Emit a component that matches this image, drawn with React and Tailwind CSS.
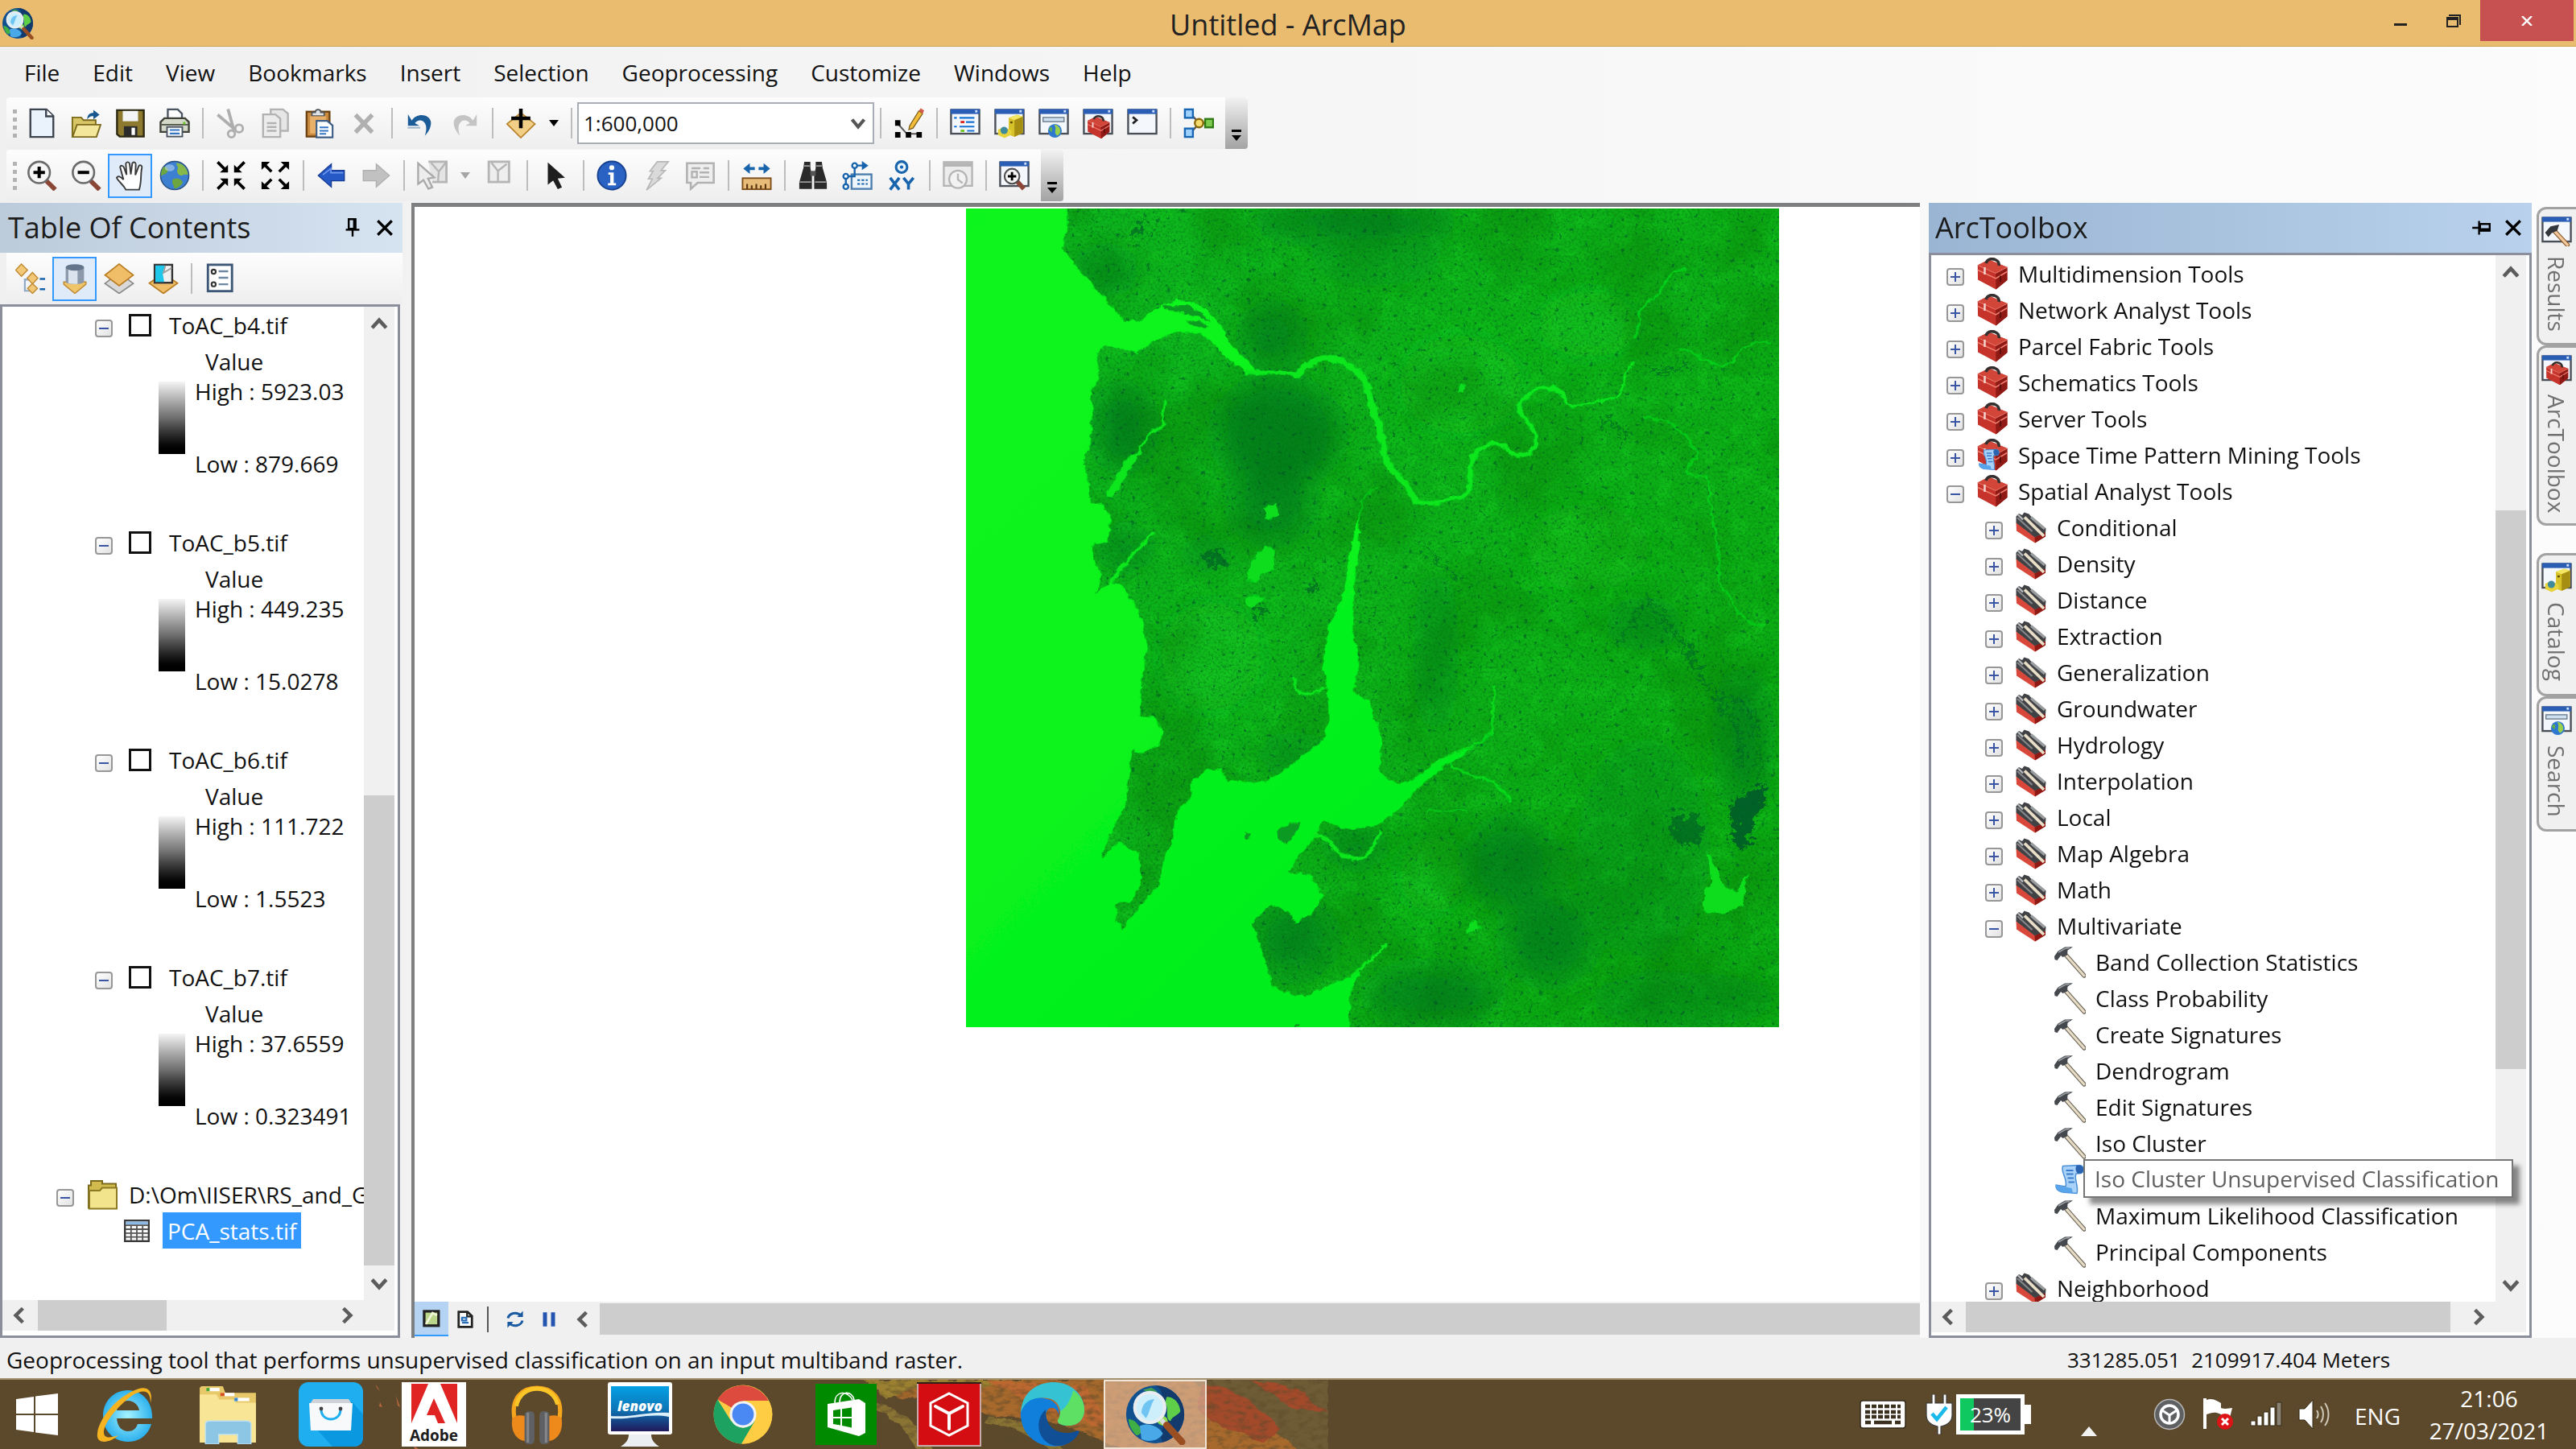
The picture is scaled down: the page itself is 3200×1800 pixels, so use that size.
import React from "react";

const Icon = ({ children, className = "w-[38px] h-[38px]" }) => (
  <svg viewBox="0 0 16 16" className={`shrink-0 ${className}`} fill="none" aria-hidden="true">
    {children}
  </svg>
);

/* ---------- shared drawings ---------- */

const WindowFrame = () => (
  <>
    <rect x="0.6" y="1.1" width="14.8" height="12.4" fill="#f4f8fc" stroke="#4a4f57" strokeWidth="1" />
    <rect x="0.4" y="0.6" width="15.2" height="2.6" fill="#2a5db4" />
    <rect x="13.2" y="1.2" width="1.2" height="1.2" fill="#cfe0ff" />
  </>
);

const ToolboxShape = () => (
  <>
    <path d="M0.7 3.8 6.2 1 15.4 4.8V11.2L9.8 15.8 0.8 11Z" fill="#c5332a" />
    <path d="M0.7 3.8 6.2 1 15.4 4.8 9.6 7.8Z" fill="#d2463a" />
    <path d="M9.6 7.8 15.4 4.8V11.2L9.8 15.8Z" fill="#8f1a15" />
    <path d="M0.8 6.2 9.7 10.4 15.3 7" stroke="#ee7f72" strokeWidth="0.6" />
    <path d="M0.7 3.8 9.6 7.8 15.4 4.8" stroke="#e8776a" strokeWidth="0.4" />
    <path d="M4.8 2.8C5.4 0.8 7.4 0.3 9.2 0.9 10.8 1.6 11.5 2.7 11.2 4" stroke="#33302f" strokeWidth="1.4" />
    <path d="M4.2 4.8V8.4" stroke="#f3d5d0" strokeWidth="1" />
    <path d="M12 9V12" stroke="#5c0f0b" strokeWidth="0.8" />
  </>
);

const GlobeLens = () => (
  <>
    <circle cx="8" cy="8" r="7.6" fill="#11508f" />
    <path d="M8 0.4A7.6 7.6 0 0 1 15.6 8 7.6 7.6 0 0 1 10 15.3C8 12 13 9 10 6 9 4 11 2 8 0.4Z" fill="#123a6c" />
    <path d="M11 3.4C13 3.4 14.4 5 14.6 7.2 13.6 8.6 12.4 8.4 12 9.8 10.4 9 11.8 6.6 10.6 5Z" fill="#5fce48" />
    <path d="M9 8.4C10.4 8 11.6 9 11.2 10.4 10.4 11.4 9 10.8 8.6 10Z" fill="#8fdc4a" />
    <path d="M1 9.2C3 9.4 3.6 11 4.6 12 4.2 13.2 3.6 13.6 3 13.4 1.8 12.2 1.1 10.8 1 9.2Z" fill="#3fae45" />
    <path d="M4 11C6 10 9 11 10 13 9 15 6 15.4 4.4 14.4Z" fill="#49a9e8" />
    <path d="M4.8 1.6 7 1 8.6 2 6.4 2.4Z" fill="#3f9a58" />
    <circle cx="6.6" cy="6.2" r="3.9" fill="#cdeefb" stroke="#e8edf1" strokeWidth="0.9" />
    <path d="M4.4 7.6C4.6 5 6 4.2 7.8 4 6.8 5.4 6.6 7.6 5.6 9Z" fill="#6fc4f2" />
    <path d="M9.6 9.4 11 11" stroke="#d9dde0" strokeWidth="1.2" />
    <path d="M11 10.8 15 15.2" stroke="#9a4f22" strokeWidth="1.8" strokeLinecap="round" />
  </>
);

const SmallGlobe = ({ cx, cy, r }) => (
  <>
    <circle cx={cx} cy={cy} r={r} fill="#2f78cf" />
    <path
      d={`M${cx - r * 0.1} ${cy - r * 0.9}C${cx + r * 0.9} ${cy - r * 0.8} ${cx + r * 1.1} ${cy + r * 0.5} ${cx + r * 0.3} ${cy + r * 0.7}C${cx - r * 0.3} ${cy + r * 0.2} ${cx + r * 0.4} ${cy - r * 0.2} ${cx - r * 0.1} ${cy - r * 0.9}Z`}
      fill="#9ad04c"
    />
    <path
      d={`M${cx - r * 0.9} ${cy - r * 0.2}C${cx - r * 0.5} ${cy - r * 0.9} ${cx - r * 0.2} ${cy - r * 0.4} ${cx - r * 0.5} ${cy + r * 0.2}Z`}
      fill="#5fae4c"
    />
  </>
);

const Cabinet = () => (
  <>
    <path d="M7.6 5.2 12 3.6 15 4.6V13L10.6 15.2 7.6 14Z" fill="#d8c22a" />
    <path d="M7.6 5.2 12 3.6 15 4.6 10.6 6.4Z" fill="#f3e663" />
    <path d="M10.6 6.4 15 4.6V13L10.6 15.2Z" fill="#a58e12" />
    <path d="M2 11.4 5.2 10 9 11.8V14L5.4 15.8 2 14.2Z" fill="#e7d43c" />
    <circle cx="5.2" cy="11.8" r="1.9" fill="#3f8a9c" />
    <path d="M8.4 7.6H9.6" stroke="#5a4d05" strokeWidth="1" />
  </>
);

const HammerShape = () => (
  <>
    <path d="M6 4.4 15.2 14.8" stroke="#6e675a" strokeWidth="2.2" strokeLinecap="round" />
    <path d="M6.2 4.6 15.1 14.7" stroke="#e6dcc5" strokeWidth="1.3" strokeLinecap="round" />
    <path d="M0.4 5.2 2.2 2.6 5.6 0.6 9.6 0.5 7 2.2 6.8 4.6 4.6 5.6 3.6 4.8 1.8 7.2 0.6 6.8Z" fill="#45484c" />
    <path d="M2.4 3.2 5.8 1.3 8 1" stroke="#9da2a8" strokeWidth="0.6" />
  </>
);

const ScrollShape = () => (
  <>
    <path d="M4.6 1.4 12.6 1C15 1 15.6 3.8 13.8 5L11.2 5.2C10 8 12.6 11 11.6 15L4.4 14.4C2 13.8 1 12.4 1.2 10.8L6 11.6C7.2 8 3.4 4.6 4.6 1.4Z" fill="#a9d2f8" stroke="#4b8fd6" strokeWidth="0.6" />
    <path d="M6.2 3.6H9.8M6.4 5.4H9.8M7 7.4H10M7.4 9.4H10.4" stroke="#3b7ccb" strokeWidth="0.8" />
    <path d="M11.4 1.2C10.6 2.6 11 4 12 5.1L13.8 5C15.6 3.8 15 1 12.6 1Z" fill="#2a64b0" />
    <path d="M1.2 10.8 9 12.4 9.6 14.8 4.4 14.4C2 13.8 1 12.4 1.2 10.8Z" fill="#57a4ea" />
  </>
);

const SmallToolbox = () => (
  <Icon className="w-10 h-10"><ToolboxShape /></Icon>
);
const ScriptToolbox = () => (
  <Icon className="w-10 h-10">
    <ToolboxShape />
    <g transform="translate(0.6 4.6) scale(0.72)"><ScrollShape /></g>
  </Icon>
);
const Toolset = () => (
  <Icon className="w-10 h-10">
    <path d="M0.6 5.6 10 12.8 15.2 10.4V12.6L10 15.8 0.8 9.8Z" fill="#d9463a" />
    <path d="M9.8 12.8 15.2 10.2V12.6L10 15.8Z" fill="#8f1a15" />
    <path d="M0.6 2.6 2 1.2 3.6 2 4.6 0.6 7 1.4 8 2.6 15.4 8.6 15.2 10.6 9.8 12.9 0.6 5.8Z" fill="#3f4144" />
    <path d="M8 3 14.8 8.8" stroke="#9a9da0" strokeWidth="1.3" />
    <path d="M4.8 3 14.4 12.4" stroke="#e9dec7" strokeWidth="1.5" />
    <path d="M1.2 3.2 8.6 10" stroke="#85878a" strokeWidth="0.9" />
    <path d="M1.6 1.8 4 4.2" stroke="#b9bcbf" strokeWidth="0.9" />
  </Icon>
);
const Hammer = () => (
  <Icon className="w-10 h-10"><HammerShape /></Icon>
);
const Script = () => (
  <Icon className="w-10 h-10"><ScrollShape /></Icon>
);

/* ---------- toolbar icons ---------- */

const icons = {
  new: (
    <Icon>
      <path d="M2 0.8H10.4L14 4.2V15.2H2Z" fill="#eaf3fb" stroke="#3c4450" />
      <path d="M10.2 0.8V4.4H14" fill="#fff" stroke="#3c4450" />
    </Icon>
  ),
  open: (
    <Icon>
      <path d="M0.8 5H5.4L6.6 6.4H13V15H0.8Z" fill="#d8c566" stroke="#7c6a1c" strokeWidth="0.8" />
      <path d="M3.2 8.8H15.6L13.4 15.2H0.9Z" fill="#f3e79b" stroke="#7c6a1c" strokeWidth="0.8" />
      <path d="M8.6 6C8.6 3.6 9.8 2.6 11.8 2.6V1L15 3.6 11.8 6V4.4C10.4 4.2 9.6 4.8 8.6 6Z" fill="#17578f" />
    </Icon>
  ),
  save: (
    <Icon>
      <path d="M1 1.2H15V15H2.4L1 13.8Z" fill="#8d7a2f" stroke="#2b2710" />
      <rect x="4" y="1.6" width="8" height="5.4" fill="#f2f4f6" />
      <rect x="4.6" y="9.6" width="7" height="5.2" fill="#2b2b2b" />
      <rect x="8.6" y="10.4" width="1.8" height="3.8" fill="#fff" />
    </Icon>
  ),
  print: (
    <Icon>
      <path d="M4.4 7V0.8H9.6L11.8 3V7" fill="#fff" stroke="#4a5462" />
      <path d="M0.6 7.4 2.6 5.4H13.4L15.4 7.4V12.6H0.6Z" fill="#d4d8c8" stroke="#3e4238" />
      <path d="M1 8.8H15" stroke="#4c5146" strokeWidth="0.8" />
      <rect x="4" y="10" width="8" height="5" fill="#fff" stroke="#4a5462" strokeWidth="0.8" />
      <path d="M5.4 11.6H10.6M5.4 13.4H10.6" stroke="#3576c4" strokeWidth="0.9" />
      <circle cx="13" cy="8" r="0.7" fill="#6cc421" />
    </Icon>
  ),
  cut: (
    <Icon>
      <path d="M1 3.6 10.2 11.4M6.4 0.6 9.4 11.4" stroke="#aeaeae" strokeWidth="1.6" />
      <circle cx="12.2" cy="10.8" r="2" stroke="#aeaeae" strokeWidth="1.2" />
      <circle cx="8.2" cy="13.6" r="1.8" stroke="#aeaeae" strokeWidth="1.2" />
    </Icon>
  ),
  copy: (
    <Icon>
      <path d="M5.6 0.8H12L14.6 3V12H5.6Z" fill="#e6e6e6" stroke="#b2b2b2" />
      <path d="M1.6 3.4H8L10.6 5.6V15.2H1.6Z" fill="#ececec" stroke="#b2b2b2" />
      <path d="M3.6 8H8.6M3.6 10H8.6M3.6 12H8.6" stroke="#b2b2b2" />
    </Icon>
  ),
  paste: (
    <Icon>
      <rect x="1.2" y="2" width="12" height="13" fill="#c98a3f" stroke="#6d4312" />
      <path d="M4 4.2V2.4H5.8C5.8 0.4 8.6 0.4 8.6 2.4H10.4V4.2Z" fill="#dfe3e6" stroke="#4d5358" strokeWidth="0.7" />
      <rect x="3" y="4.4" width="8.4" height="9" fill="#e9b06a" />
      <path d="M6.4 6.8H12L14.8 9.2V15.4H6.4Z" fill="#fff" stroke="#3c5e86" strokeWidth="0.9" />
      <path d="M8 10.2H12.6M8 12H12.6M8 13.6H11.4" stroke="#3576c4" strokeWidth="0.9" />
    </Icon>
  ),
  del: (
    <Icon>
      <path d="M3.6 3.6 12.4 12.8M12.4 3.6 3.6 12.8" stroke="#b0b0b0" strokeWidth="2.3" />
    </Icon>
  ),
  undo: (
    <Icon>
      <path d="M3.6 6.6C6 2.4 13 3 13.6 7.4 13.8 10.4 12 12.8 10.4 14.6 11.6 11.2 11.4 8.4 9.6 7 7.8 6 6.4 6.6 5.2 8L7.6 9.4H1.6V3.4Z" fill="#1c5c98" />
      <path d="M1.4 10.4H8" stroke="#9fb4c8" strokeWidth="0.8" />
    </Icon>
  ),
  redo: (
    <Icon>
      <path d="M12.4 6.6C10 2.4 3 3 2.4 7.4 2.2 10.4 4 12.8 5.6 14.6 4.4 11.2 4.6 8.4 6.4 7 8.2 6 9.6 6.6 10.8 8L8.4 9.4H14.4V3.4Z" fill="#c4c4c4" />
    </Icon>
  ),
  add: (
    <Icon>
      <path d="M0.8 8.4 8 2.6 15.4 8.4 8 15.6Z" fill="#f2cf86" stroke="#b9822c" strokeWidth="0.7" />
      <path d="M8 0.4V10.6M3 5.5H13" stroke="#000" strokeWidth="1.9" />
    </Icon>
  ),
  edit: (
    <Icon>
      <path d="M2 8 7 13.6H14" stroke="#555" strokeWidth="0.8" />
      <path d="M0.8 6.4H3.6V9.4H0.8ZM0.8 12.6H3.6V15.6H0.8ZM6.4 12.6H9.2V15.6H6.4ZM12 12.6H14.8V15.6H12Z" fill="#000" />
      <path d="M8.4 9.4 13.2 1.6 15.2 3 10.2 10.6 8 11.4Z" fill="#f2bd3a" stroke="#7b5a17" strokeWidth="0.5" />
      <path d="M13.2 1.6 14.2 0.2 16 1.4 15.2 3Z" fill="#d55a4a" />
    </Icon>
  ),
  toc: (
    <Icon>
      <WindowFrame />
      <path d="M2.2 5.2H3.6M2.2 9.8H3.6M5 5.2H12.8M8.4 7.4H12.8M5 9.8H12.8M9 12H12.8" stroke="#1672d3" strokeWidth="0.9" />
      <path d="M5.6 7.4H7.6" stroke="#d9251c" strokeWidth="1.2" />
      <path d="M5.6 12H7.6" stroke="#6cc421" strokeWidth="1.2" />
    </Icon>
  ),
  catalog: (
    <Icon><WindowFrame /><Cabinet /></Icon>
  ),
  search: (
    <Icon>
      <WindowFrame />
      <rect x="2.4" y="5" width="11" height="2.2" fill="#cfe0f0" stroke="#6f7f90" strokeWidth="0.6" />
      <SmallGlobe cx={8.6} cy={12} r={3.6} />
    </Icon>
  ),
  toolbox: (
    <Icon>
      <WindowFrame />
      <g transform="translate(2 3.8) scale(0.78)"><ToolboxShape /></g>
    </Icon>
  ),
  results: (
    <Icon>
      <WindowFrame />
      <g transform="translate(1.6 4) scale(0.8)">
        <path d="M6 4.4 15 14" stroke="#8a5a2c" strokeWidth="3" strokeLinecap="round" />
        <path d="M6.4 4.8 15 14" stroke="#f0c79a" strokeWidth="1.8" strokeLinecap="round" />
        <path d="M0.4 6 4 2 9.6 0.8 8.4 4.8 4.6 6.4 2.6 9Z" fill="#33363a" />
      </g>
    </Icon>
  ),
  python: (
    <Icon>
      <WindowFrame />
      <path d="M3 4.8 5 6.4 3 8.2" stroke="#222" strokeWidth="1.2" />
    </Icon>
  ),
  model: (
    <Icon>
      <path d="M4 3.4 8.4 8 4 12.8M9 8H13" stroke="#5a5a5a" strokeWidth="1" />
      <rect x="0.8" y="0.8" width="4.2" height="4.4" fill="#9fd0fb" stroke="#1766b4" />
      <rect x="0.8" y="10.8" width="4.2" height="4.4" fill="#9fd0fb" stroke="#1766b4" />
      <circle cx="8.2" cy="8" r="2.2" fill="#f6dc6e" stroke="#8a6a08" />
      <rect x="11.4" y="5.8" width="4.2" height="4.4" fill="#7ccb4e" stroke="#2e7a13" />
    </Icon>
  ),
  zoomIn: (
    <Icon>
      <path d="M10.4 10.8 15 15.4" stroke="#8c4636" strokeWidth="2.4" />
      <circle cx="6.6" cy="6.4" r="5.6" fill="#f6f6f6" stroke="#6b6b6b" strokeWidth="1.1" />
      <path d="M6.6 3.4V9.4M3.6 6.4H9.6" stroke="#000" strokeWidth="1.7" />
    </Icon>
  ),
  zoomOut: (
    <Icon>
      <path d="M10.4 10.8 15 15.4" stroke="#8c4636" strokeWidth="2.4" />
      <circle cx="6.6" cy="6.4" r="5.6" fill="#f6f6f6" stroke="#6b6b6b" strokeWidth="1.1" />
      <path d="M3.6 6.4H9.6" stroke="#000" strokeWidth="1.7" />
    </Icon>
  ),
  pan: (
    <Icon>
      <path
        d="M5.6 15.4C4.4 12.8 2 11.6 0.8 9.2 1.4 8 2.8 8.4 4.4 10.2L2.6 3.6C3 2.4 4.2 2.8 4.6 3.8L6 7.6 5.6 1.8C6 0.6 7.4 0.8 7.6 2L8.2 7.4 9 1.6C9.6 0.6 10.8 1 10.8 2.2L10.6 7.8 12.4 3C13.2 2.2 14.2 2.8 14 4 13.2 7 14 11 12.6 15.4Z"
        fill="#fff"
        stroke="#3a3a3a"
        strokeWidth="0.8"
      />
    </Icon>
  ),
  globe: (
    <Icon>
      <circle cx="8" cy="8" r="7.4" fill="#3d7fd0" stroke="#274f7f" strokeWidth="0.6" />
      <path d="M9 1.4C12 1.6 14.6 4 15 7.4 14 8 13 6.8 12 8 10 8.4 8.6 6 9.6 4.4 10 3.4 8.6 2.6 9 1.4Z" fill="#86b84a" />
      <path d="M2 3.6C4.4 3 5 5 4 6.4 3 7.6 1.6 7.4 0.8 8.4 0.8 6.4 1.2 4.8 2 3.6ZM7 10C9.6 9 11.8 10 12.2 11.8 11 13.8 9.4 14.8 7.8 14.8 7.8 13 6 12 7 10Z" fill="#6da63e" />
      <ellipse cx="5.4" cy="4" rx="2.6" ry="1.8" fill="#cfe4fa" opacity="0.5" />
    </Icon>
  ),
  fixedIn: (
    <Icon>
      <path d="M1 1 5.6 5.6M15 1 10.4 5.6M1 15 5.6 10.4M15 15 10.4 10.4" stroke="#000" strokeWidth="1.5" />
      <path d="M6.4 2.4V6.4H2.2ZM9.6 2.4V6.4H13.8ZM6.4 13.6V9.6H2.2ZM9.6 13.6V9.6H13.8Z" fill="#000" />
    </Icon>
  ),
  fixedOut: (
    <Icon>
      <path d="M2 2 6 6M14 2 10 6M2 14 6 10M14 14 10 10" stroke="#000" strokeWidth="1.5" />
      <path d="M0.8 0.8H5.2L0.8 5ZM15.2 0.8H10.8L15.2 5ZM0.8 15.2H5.2L0.8 11ZM15.2 15.2H10.8L15.2 11Z" fill="#000" />
    </Icon>
  ),
  back: (
    <Icon>
      <path d="M1 8 7.8 2V5.4H14.6V10.8H7.8V14Z" fill="#2759c6" stroke="#173c93" strokeWidth="0.6" />
      <path d="M3.4 7.6 7.6 4.4V6.6H14" stroke="#6f9af0" strokeWidth="0.7" />
    </Icon>
  ),
  forward: (
    <Icon>
      <path d="M15 8 8.2 2V5.4H1.4V10.8H8.2V14Z" fill="#c1c1c1" stroke="#b0b0b0" strokeWidth="0.6" />
    </Icon>
  ),
  select: (
    <Icon>
      <path d="M6 0.8H15.4V11.4H8" fill="#e4e4e4" stroke="#b5b5b5" strokeWidth="1.2" />
      <path d="M7.4 1.4 11.4 6 15 1.4M11.4 6 11 11" stroke="#b5b5b5" />
      <path d="M0.6 1.6V12.4L3.4 10.4 6 15 8 14.2 5.8 9.6 9 9Z" fill="#ededed" stroke="#aaa" />
    </Icon>
  ),
  clear: (
    <Icon>
      <rect x="2.6" y="0.8" width="10.6" height="10.6" fill="#eee" stroke="#b5b5b5" strokeWidth="1.2" />
      <path d="M4 1.4 7.4 5.6 12 2M7.4 5.6V11" stroke="#b5b5b5" />
    </Icon>
  ),
  pointer: (
    <Icon>
      <path d="M4 1.2V12.8L6.8 10.6 9.2 15.2 11.4 14.2 9.2 9.6 13 9.2Z" fill="#1e1e1e" />
    </Icon>
  ),
  info: (
    <Icon>
      <circle cx="8" cy="8" r="7.4" fill="#2a62c4" stroke="#17418f" strokeWidth="0.8" />
      <circle cx="8" cy="3.9" r="1.3" fill="#fff" />
      <path d="M6.2 6.4H9V12H10.2V13.2H6V12H7.2V7.6H6.2Z" fill="#fff" />
    </Icon>
  ),
  bolt: (
    <Icon>
      <path d="M8.6 0.8H14.4L10.6 5.4H12.8L8.8 9.4H10.6L3 15.6 6 9.8H4L6.4 5.8H4.8Z" fill="#dadada" stroke="#b8b8b8" strokeWidth="0.7" />
    </Icon>
  ),
  html: (
    <Icon>
      <path d="M1 1.6H15V11.8H6.6L3 15V11.8H1Z" fill="#eee" stroke="#b2b2b2" strokeWidth="1.1" />
      <path d="M3.4 4.2H8M9.6 4.2H12.6M7.6 6.4H12.6M7.6 8.8H12.6" stroke="#b2b2b2" />
      <rect x="3.6" y="6" width="2.6" height="3" stroke="#b2b2b2" />
    </Icon>
  ),
  measure: (
    <Icon>
      <path d="M1 4.4 4.4 1.6V3.6H7V5.2H4.4V7.2ZM15 4.4 11.6 1.6V3.6H9V5.2H11.6V7.2Z" fill="#1764ad" />
      <rect x="0.6" y="9.4" width="14.8" height="5.8" fill="#e8bd79" stroke="#7e4f1a" strokeWidth="0.8" />
      <path d="M3 15V12.4M5.4 15V13.2M7.8 15V12.4M10.2 15V13.2M12.6 15V12.4" stroke="#5b360e" strokeWidth="0.9" />
    </Icon>
  ),
  find: (
    <Icon>
      <path d="M3.4 0.8H6.6V4L7.4 8V15H0.8V11.6L3 4ZM12.6 0.8H9.4V4L8.6 8V15H15.2V11.6L13 4Z" fill="#2a2a2a" />
      <path d="M3.4 3H6.4M9.6 3H12.6M1 11.4H7M9 11.4H15" stroke="#9a9a9a" strokeWidth="0.8" />
      <rect x="6.6" y="5.6" width="2.8" height="2.6" fill="#555" />
    </Icon>
  ),
  route: (
    <Icon>
      <rect x="5" y="7.4" width="10.4" height="7.6" fill="#eef5fb" stroke="#4d7fae" />
      <path d="M2 13.4V8.4H6.6V2.8H11" stroke="#1764ad" strokeWidth="1" />
      <path d="M10.4 0.4 13.8 2.8 10.4 5.2Z" fill="#1764ad" />
      <path d="M8 10.4H13.4M8 12.4H13.4" stroke="#1764ad" strokeWidth="0.8" strokeDasharray="1.4 0.8" />
      <circle cx="2" cy="8.4" r="1.3" fill="#fff" stroke="#1764ad" />
      <circle cx="2" cy="13.8" r="1.3" fill="#fff" stroke="#1764ad" />
      <circle cx="6.6" cy="2.8" r="1.3" fill="#fff" stroke="#1764ad" />
    </Icon>
  ),
  xy: (
    <Icon>
      <circle cx="8" cy="3.6" r="2.9" fill="#eaf4fc" stroke="#1764ad" strokeWidth="1.3" />
      <circle cx="8" cy="3.6" r="0.9" fill="#1764ad" />
      <path d="M2 9.2 6.8 15.4M6.8 9.2 2 15.4M9 9.2 11.6 12.4 14.2 9.2M11.6 12.2V15.4" stroke="#1764ad" strokeWidth="1.5" />
    </Icon>
  ),
  time: (
    <Icon>
      <rect x="0.6" y="1" width="14.8" height="12.4" fill="#ececec" stroke="#b5b5b5" />
      <path d="M0.6 2.4H15.4" stroke="#b5b5b5" strokeWidth="2" />
      <circle cx="8" cy="10" r="4.6" fill="#f2f2f2" stroke="#b5b5b5" />
      <path d="M8 7V10.2L10.4 12" stroke="#b5b5b5" />
    </Icon>
  ),
  magnifier: (
    <Icon>
      <WindowFrame />
      <path d="M9.4 11 13 15" stroke="#8c4636" strokeWidth="2.4" />
      <circle cx="6.8" cy="8.4" r="3.9" fill="#f4f4f4" stroke="#4e4e4e" strokeWidth="0.9" />
      <path d="M6.8 6.2V10.6M4.6 8.4H9" stroke="#000" strokeWidth="1.2" />
    </Icon>
  ),
  byDrawing: (
    <Icon>
      <path d="M5 8V14.4H9M5 8.6H9" stroke="#8fa9c4" strokeWidth="0.9" />
      <path d="M3.2 0.4 6.4 3.6 3.2 6.8 0.2 3.6ZM9 4.8 11.8 7.8 9 10.8 6.2 7.8ZM9 10.6 11.6 13.2 9 15.8 6.4 13.2Z" fill="#f2c877" stroke="#c08a33" strokeWidth="0.6" />
      <path d="M12.8 8.2H15.6M12.8 13.6H15.6" stroke="#1764ad" strokeWidth="1.1" />
    </Icon>
  ),
  bySource: (
    <Icon>
      <path d="M2.2 9.8H13.8V11L8 15.8 2.2 11Z" fill="#f0c469" stroke="#c08a33" strokeWidth="0.6" />
      <path d="M3.2 2V9.6C3.2 11.4 12.8 11.4 12.8 9.6V2Z" fill="#8c99ab" />
      <path d="M4.6 2.6V10.4C6 10.8 8 10.9 9.4 10.8V3.2Z" fill="#dbe3ee" />
      <ellipse cx="8" cy="2.2" rx="4.8" ry="1.7" fill="#65758b" />
    </Icon>
  ),
  byVisibility: (
    <Icon>
      <path d="M0.6 10.6 8 5 15.4 10.6 8 15.8Z" fill="#d9d9d9" stroke="#8a8a8a" strokeWidth="0.7" />
      <path d="M0.6 6.2 8 0.4 15.4 6.2 8 11.8Z" fill="#f0be68" stroke="#b97d24" strokeWidth="0.7" />
    </Icon>
  ),
  bySelection: (
    <Icon>
      <path d="M0.6 10.4 8 5.4 15.4 10.4 8 15.8Z" fill="#f0be68" stroke="#b97d24" strokeWidth="0.7" />
      <rect x="3.4" y="0.8" width="9.2" height="9.4" fill="#f0f0f0" stroke="#333" />
      <path d="M3.8 1.2H9L7.6 5 8.4 9.8H3.8Z" fill="#1fc8ea" />
      <path d="M9 1.4 8 5 12.4 2.4" stroke="#999" strokeWidth="0.7" />
    </Icon>
  ),
  options: (
    <Icon>
      <rect x="1.8" y="0.8" width="12.6" height="13.8" fill="#fff" stroke="#3c5676" strokeWidth="1.2" />
      <circle cx="4.8" cy="4.4" r="1.1" stroke="#333" strokeWidth="0.9" />
      <circle cx="4.8" cy="11" r="1.1" stroke="#333" strokeWidth="0.9" />
      <path d="M7.4 4.2H12.4M7.4 7.6H12.4M7.4 11H12.4" stroke="#6f87a3" strokeWidth="1" />
    </Icon>
  ),
};

/* ---------- small controls ---------- */

const ToolButton = ({ icon, label, active }) => (
  <button
    type="button"
    aria-label={label}
    className={`flex h-[55px] w-[55px] shrink-0 items-center justify-center ${active ? "border-2 border-[#3399ff] bg-[#dfebf8]" : ""}`}
  >
    {icons[icon]}
  </button>
);

const Sep = () => (
  <span className="flex w-[15px] shrink-0 justify-center">
    <span className="h-[38px] w-0.5 bg-[#bdbdbd]" />
  </span>
);

const Grip = () => (
  <span className="flex w-4 shrink-0 flex-col items-center gap-[5px] pl-1">
    {[0, 1, 2, 3].map((k) => (
      <span key={k} className="h-[5px] w-[5px] bg-[#b3b3b3]" />
    ))}
  </span>
);

const Caret = ({ disabled }) => (
  <button type="button" aria-label="More" className="flex w-7 shrink-0 items-center justify-center">
    <svg viewBox="0 0 12 8" className="h-2 w-3" fill={disabled ? "#a5a5a5" : "#000"}><path d="M0 0H12L6 8Z" /></svg>
  </button>
);

const Overflow = () => (
  <button
    type="button"
    aria-label="Toolbar options"
    className="flex w-7 shrink-0 items-end justify-center self-stretch rounded-r bg-linear-to-b from-[#f2f2f2] to-[#a3a3a3] pb-2"
  >
    <svg viewBox="0 0 12 16" className="h-4 w-3"><path d="M0 0H12V3H0ZM0 7H12L6 14Z" fill="#000" /></svg>
  </button>
);

const Toolbar = ({ children }) => (
  <div className="ml-2 flex h-16 w-fit items-center rounded-l bg-linear-to-b from-[#fdfdfd] to-[#eeeeee]">{children}</div>
);

const arrowPaths = {
  up: "M3 11 8 5.5 13 11",
  down: "M3 5.5 8 11 13 5.5",
  left: "M10.5 3 5.5 8 10.5 13",
  right: "M5.5 3 10.5 8 5.5 13",
};
const ScrollArrow = ({ dir, className }) => (
  <button type="button" aria-label={`Scroll ${dir}`} className={`flex shrink-0 items-center justify-center ${className}`}>
    <svg viewBox="0 0 16 16" className="h-7 w-7" fill="none">
      <path d={arrowPaths[dir]} stroke="#5c5c5c" strokeWidth="2.6" />
    </svg>
  </button>
);

/* before / thumb / after are relative lengths of the track */
const VScroll = ({ before, thumb, after }) => (
  <div className="flex w-[38px] shrink-0 flex-col bg-[#f0f0f0]">
    <ScrollArrow dir="up" className="h-[42px]" />
    <div style={{ flexGrow: before }} />
    <div className="bg-[#cdcdcd]" style={{ flexGrow: thumb }} />
    <div style={{ flexGrow: after }} />
    <ScrollArrow dir="down" className="h-[42px]" />
  </div>
);
const HScroll = ({ before, thumb, after }) => (
  <div className="flex h-[38px] min-w-0 flex-1 bg-[#f0f0f0]">
    <ScrollArrow dir="left" className="w-[42px]" />
    <div style={{ flexGrow: before }} />
    <div className="bg-[#cdcdcd]" style={{ flexGrow: thumb }} />
    <div style={{ flexGrow: after }} />
    <ScrollArrow dir="right" className="w-[42px]" />
  </div>
);

const Expander = ({ open }) => (
  <button
    type="button"
    aria-label={open ? "Collapse" : "Expand"}
    className="mt-2 flex h-[22px] w-[22px] shrink-0 items-center justify-center rounded-sm border-2 border-[#979797] bg-linear-to-br from-white to-[#e2e2e2]"
  >
    <svg viewBox="0 0 12 12" className="h-3 w-3" stroke="#3b55a5" strokeWidth="2">
      <path d={open ? "M0 6H12" : "M0 6H12M6 0V12"} />
    </svg>
  </button>
);

const Pin = ({ sideways }) => (
  <button type="button" aria-label="Auto hide" className="flex w-10 items-center justify-center">
    <svg viewBox="0 0 16 20" className={`h-6 w-5 ${sideways ? "rotate-90" : ""}`} fill="none" stroke="#000">
      <path d="M4 1H11V11H4Z" strokeWidth="2" />
      <path d="M10 1V11" strokeWidth="3" />
      <path d="M1 12H15" strokeWidth="2" />
      <path d="M8 12V19" strokeWidth="2" />
    </svg>
  </button>
);
const Close = () => (
  <button type="button" aria-label="Close" className="flex w-10 items-center justify-center">
    <svg viewBox="0 0 16 16" className="h-5 w-5" stroke="#000" strokeWidth="2.6">
      <path d="M1 1 15 15M15 1 1 15" />
    </svg>
  </button>
);

/* ---------- table of contents ---------- */

const layers = [
  { name: "ToAC_b4.tif", high: "5923.03", low: "879.669" },
  { name: "ToAC_b5.tif", high: "449.235", low: "15.0278" },
  { name: "ToAC_b6.tif", high: "111.722", low: "1.5523" },
  { name: "ToAC_b7.tif", high: "37.6559", low: "0.323491" },
];

const Layer = ({ name, high, low }) => (
  <li className="h-[270px]">
    <div className="flex h-[45px] items-center pl-[115px]">
      <Expander open />
      <label className="ml-5 flex items-center gap-[22px]">
        <input type="checkbox" className="h-7 w-7 appearance-none border-[3px] border-[#111] bg-white" />
        {name}
      </label>
    </div>
    <div className="flex h-[45px] items-center pl-[252px]">Value</div>
    <div className="flex pl-[194px]">
      <div className="mt-[3px] h-[90px] w-[33px] shrink-0 bg-linear-to-b from-[#f5f5f5] via-[#6f6f6f] to-black" />
      <div className="ml-3 flex h-[120px] flex-col justify-between leading-[30px] whitespace-nowrap">
        <span>High : {high}</span>
        <span>Low : {low}</span>
      </div>
    </div>
  </li>
);

const TableOfContents = () => (
  <section className="flex w-[500px] shrink-0 flex-col">
    <header className="flex h-[62px] shrink-0 items-center bg-linear-to-r from-[#bccbda] to-[#d6e3f1] pr-0.5 pl-2.5">
      <h2 className="flex-1 text-[36px] leading-none whitespace-nowrap text-[#1c1c1c]">Table Of Contents</h2>
      <Pin />
      <Close />
    </header>
    <div className="ml-2 flex h-[64px] shrink-0 items-center bg-linear-to-b from-[#fdfdfd] to-[#eeeeee] pl-0.5">
      <ToolButton icon="byDrawing" label="List By Drawing Order" />
      <ToolButton icon="bySource" label="List By Source" active />
      <ToolButton icon="byVisibility" label="List By Visibility" />
      <ToolButton icon="bySelection" label="List By Selection" />
      <Sep />
      <ToolButton icon="options" label="Options" />
    </div>
    <div className="mr-[3px] flex min-h-0 flex-1 flex-col border-[3px] border-[#8b8f9c] bg-white pr-1 pb-1.5">
      <div className="flex min-h-0 flex-1">
        <ul className="min-w-0 flex-1 overflow-hidden">
          {layers.map((l) => (
            <Layer key={l.name} {...l} />
          ))}
          <li className="flex h-[45px] items-center pl-[67px] whitespace-nowrap">
            <Expander open />
            <svg viewBox="0 0 16 16" className="mr-3 ml-4 h-10 w-10 shrink-0">
              <path d="M0.8 3.4H2V1.2H7.6V2.6H14.4V14.6H0.8Z" fill="#d2bb4e" stroke="#7c6a1c" strokeWidth="0.8" />
              <path d="M1.2 6H6.4L7.6 4.6H14.8V15H1.2Z" fill="#f1e48c" stroke="#8d7a24" strokeWidth="0.8" />
            </svg>
            <span className="min-w-0 flex-1 overflow-hidden leading-10">D:\Om\IISER\RS_and_G</span>
          </li>
          <li className="flex h-[45px] items-center pl-[151px]">
            <svg viewBox="0 0 16 14" className="h-7 w-8 shrink-0">
              <rect x="0.6" y="0.6" width="14.8" height="12.8" fill="#fff" stroke="#3a3a3a" strokeWidth="1.2" />
              <rect x="1.2" y="1.2" width="13.6" height="2" fill="#8cb8e6" />
              <path d="M1 3.6H15M1 6H15M1 8.4H15M1 10.8H15M4.4 3.4V13M8 3.4V13M11.6 3.4V13" stroke="#555" strokeWidth="0.9" />
            </svg>
            <span className="ml-4 flex h-[45px] items-center bg-[#3399ff] px-1.5 text-white">PCA_stats.tif</span>
          </li>
        </ul>
        <VScroll before={564} thumb={582} after={1} />
      </div>
      <div className="flex bg-[#f0f0f0]">
        <HScroll before={2} thumb={160} after={202} />
        <div className="w-[38px]" />
      </div>
    </div>
  </section>
);

/* ---------- map ---------- */

const RasterMap = () => (
  <svg
    viewBox="58 27 1466 1504"
    preserveAspectRatio="none"
    className="h-[1017px] w-[1010px] shrink-0"
    role="img"
    aria-label="Raster layer"
  >
    <defs>
      <filter id="grain" x="0" y="0" width="100%" height="100%" colorInterpolationFilters="sRGB">
        <feTurbulence type="fractalNoise" baseFrequency="0.22" numOctaves="3" seed="7" />
        <feColorMatrix values="0 0 0 0 0.02  0 0 0 0 0.42  0 0 0 0 0.08  3.4 0 0 0 -1.5" />
      </filter>
      <filter id="mottle" x="0" y="0" width="100%" height="100%" colorInterpolationFilters="sRGB">
        <feTurbulence type="fractalNoise" baseFrequency="0.006" numOctaves="6" seed="21" />
        <feColorMatrix values="0 0 0 0 0.04  0 0 0 0 0.5  0 0 0 0 0.03  4 0 0 0 -1.9" />
      </filter>
      <filter id="light" x="0" y="0" width="100%" height="100%" colorInterpolationFilters="sRGB">
        <feTurbulence type="fractalNoise" baseFrequency="0.03" numOctaves="5" seed="40" />
        <feColorMatrix values="0 0 0 0 0.08  0 0 0 0 0.8  0 0 0 0 0.12  0 5 0 0 -2.5" />
      </filter>
      <filter id="specks" x="0" y="0" width="100%" height="100%" colorInterpolationFilters="sRGB">
        <feTurbulence type="fractalNoise" baseFrequency="0.11" numOctaves="4" seed="3" />
        <feColorMatrix values="0 0 0 0 0  0 0 0 0 0.3  0 0 0 0 0.16  10 0 0 0 -6.8" />
      </filter>
      <filter id="rough" x="-2%" y="-2%" width="104%" height="104%">
        <feTurbulence type="fractalNoise" baseFrequency="0.07" numOctaves="3" seed="5" result="n" />
        <feDisplacementMap in="SourceGraphic" in2="n" xChannelSelector="R" yChannelSelector="G" scale="12" />
      </filter>
      <filter id="torn" x="-10%" y="-10%" width="120%" height="120%">
        <feTurbulence type="fractalNoise" baseFrequency="0.08" numOctaves="4" seed="11" result="n" />
        <feDisplacementMap in="SourceGraphic" in2="n" xChannelSelector="R" yChannelSelector="G" scale="50" />
      </filter>
      <filter id="soft" x="-60%" y="-60%" width="220%" height="220%">
        <feGaussianBlur stdDeviation="26" />
      </filter>
      <linearGradient id="sea" x1="0" y1="0" x2="0.6" y2="1">
        <stop offset="0" stopColor="#0bf61c" />
        <stop offset="0.55" stopColor="#08f41a" />
        <stop offset="1" stopColor="#04ee1b" />
      </linearGradient>
      <linearGradient id="land" x1="0" y1="0" x2="1" y2="0.5">
        <stop offset="0" stopColor="#0eb820" />
        <stop offset="1" stopColor="#0cae14" />
      </linearGradient>
    </defs>
    <rect x="58" y="27" width="1466" height="1504" fill="url(#land)" />
    <rect x="58" y="27" width="1466" height="1504" filter="url(#light)" opacity="0.4" />
    <g filter="url(#soft)" fill="#14cc22">
      <ellipse cx="950" cy="350" rx="110" ry="90" opacity="0.5" />
      <ellipse cx="500" cy="850" rx="90" ry="100" opacity="0.4" />
      <ellipse cx="1180" cy="240" rx="90" ry="60" opacity="0.45" />
      <ellipse cx="900" cy="1250" rx="60" ry="70" opacity="0.45" />
      <ellipse cx="1180" cy="650" rx="110" ry="80" opacity="0.35" />
    </g>
    <rect x="58" y="27" width="1466" height="1504" filter="url(#mottle)" opacity="0.4" />
    <g filter="url(#soft)" fill="#06721a">
      <ellipse cx="620" cy="440" rx="110" ry="100" opacity="0.75" />
      <ellipse cx="610" cy="570" rx="70" ry="70" opacity="0.6" />
      <ellipse cx="610" cy="260" rx="50" ry="55" opacity="0.65" />
      <ellipse cx="760" cy="50" rx="190" ry="34" opacity="0.7" />
      <ellipse cx="800" cy="120" rx="120" ry="50" opacity="0.25" />
      <ellipse cx="310" cy="140" rx="60" ry="50" opacity="0.5" />
      <ellipse cx="340" cy="430" rx="50" ry="80" opacity="0.7" />
      <ellipse cx="345" cy="650" rx="40" ry="40" opacity="0.6" />
      <ellipse cx="905" cy="840" rx="24" ry="150" opacity="0.6" />
      <ellipse cx="1040" cy="1230" rx="80" ry="80" opacity="0.6" />
      <ellipse cx="1110" cy="1370" rx="80" ry="80" opacity="0.65" />
      <ellipse cx="900" cy="1470" rx="120" ry="50" opacity="0.6" />
      <ellipse cx="1350" cy="1480" rx="170" ry="50" opacity="0.4" />
      <ellipse cx="1280" cy="1200" rx="120" ry="200" opacity="0.25" />
      <ellipse cx="1280" cy="790" rx="70" ry="50" opacity="0.5" />
      <ellipse cx="1460" cy="1000" rx="40" ry="130" opacity="0.6" />
      <ellipse cx="650" cy="1370" rx="70" ry="70" opacity="0.6" />
      <ellipse cx="760" cy="1200" rx="50" ry="34" opacity="0.7" />
      <ellipse cx="490" cy="660" rx="34" ry="28" opacity="0.6" />
      <ellipse cx="650" cy="1030" rx="70" ry="24" opacity="0.6" />
    </g>
    <rect x="58" y="27" width="1466" height="1504" filter="url(#grain)" opacity="0.36" />
    <rect x="58" y="27" width="1466" height="1504" filter="url(#specks)" opacity="0.5" />

    <g filter="url(#torn)">
      <g fill="#04562a" opacity="0.85">
        <path d="M1450 1110 1490 1080 1505 1120 1480 1140 1470 1200 1445 1200 1435 1130Z" />
        <path d="M1330 1140 1380 1145 1390 1180 1355 1205 1328 1180Z" opacity="0.7" />
        <path d="M368 60 384 40 380 70 358 82ZM485 660 515 655 535 680 495 685ZM675 720 698 690 682 740ZM572 755 605 760 580 778Z" opacity="0.7" />
      </g>
      <g fill="none" stroke="#06642a" strokeWidth="5" opacity="0.6">
        <path d="M1285 740C1310 780 1340 800 1360 850 1390 890 1400 930 1450 930 1480 950 1490 1010 1490 1070" />
        <path d="M1225 830C1250 810 1260 780 1285 755M1300 780C1330 790 1360 830 1380 880M1410 940C1450 960 1460 1010 1450 1050" />
        <path d="M1290 320 1330 330 1360 310M1200 410 1250 440 1235 450M890 650 910 680 945 705" />
      </g>
    </g>
    <g filter="url(#rough)">
      <path
        fill="url(#sea)"
        d="M40 10 240 10 242 60 230 98 272 150 310 195 345 235 375 232 400 210 440 195 480 203 510 230 535 275 585 328 570 332 530 305 490 260 440 252 400 270 365 292 310 278 295 290 298 340 283 360 287 400 280 470 270 490 285 568 305 570 318 595 315 640 285 645 290 680 305 700 290 735 320 712 345 725 375 780 385 830 375 890 372 960 400 962 412 985 404 1015 372 1028 358 1020 350 1080 345 1130 325 1160 300 1222 335 1190 370 1212 375 1265 360 1298 330 1305 328 1335 342 1350 375 1305 405 1270 415 1220 430 1190 440 1130 465 1110 465 1080 490 1060 520 1055 530 1080 600 1080 650 1045 700 1005 712 970 710 910 700 870 710 800 740 730 752 650 766 590 768 640 758 720 755 800 768 860 755 915 785 930 805 990 805 1060 820 1078 845 1083 880 1065 910 1036 975 1018 925 1048 870 1095 840 1130 800 1160 750 1168 700 1152 690 1178 655 1220 640 1248 680 1252 702 1290 684 1320 655 1340 640 1320 605 1305 575 1340 590 1390 615 1460 665 1475 720 1450 768 1430 750 1470 750 1550 40 1550Z"
      />
      <g fill="none" stroke="#09e51c" strokeLinecap="round" strokeLinejoin="round">
        <path d="M565 328C600 330 630 326 655 333 680 300 720 290 745 315" strokeWidth="9" />
        <path d="M668 318C690 300 725 295 745 315 775 330 785 350 787 385 800 410 806 440 815 490 835 520 855 530 868 565" strokeWidth="13" />
        <path d="M868 565C900 575 930 560 955 555 975 545 965 510 970 485 990 455 1020 450 1040 475 1070 490 1090 470 1085 440 1070 410 1040 395 1065 375 1090 350 1130 345 1140 385" strokeWidth="8" />
        <path d="M1140 385C1165 400 1200 375 1230 375 1250 355 1240 330 1260 310" strokeWidth="4" />
        <path d="M1265 265C1280 230 1260 210 1300 190 1325 165 1320 140 1355 140" strokeWidth="4" opacity="0.65" />
        <path d="M1345 285C1380 285 1400 330 1440 310 1460 270 1480 275 1505 272" strokeWidth="4" opacity="0.65" />
        <path d="M1280 410C1330 415 1370 440 1375 485 1330 520 1380 520 1395 520 1400 600 1420 650 1415 710 1440 760 1460 790 1495 795" strokeWidth="4" opacity="0.55" />
        <path d="M318 552C340 530 345 495 370 475 385 435 400 435 415 425 405 400 420 390 418 380" strokeWidth="5" />
        <path d="M318 552C335 530 340 505 360 485" strokeWidth="14" />
        <path d="M322 712C340 680 360 660 395 625" strokeWidth="7" />
        <path d="M766 600C770 560 780 550 800 540" strokeWidth="3" opacity="0.6" />
        <path d="M650 890C655 940 680 915 705 908" strokeWidth="5" />
        <path d="M690 1175C720 1190 735 1225 765 1222 795 1215 790 1190 805 1175" strokeWidth="7" />
        <path d="M900 1050C930 1025 970 1025 1005 990 1010 950 1005 930 1012 905M930 1045C960 1080 1010 1060 1040 1115" strokeWidth="5" opacity="0.75" />
        <path d="M890 1134H960" strokeWidth="3" opacity="0.6" />
        <path d="M750 1440 790 1405 815 1380" strokeWidth="5" />
      </g>
      <g fill="#08dd1b">
        <path d="M595 575 618 570 620 592 600 598ZM565 712 572 680 595 645 615 655 612 690 590 700 582 712ZM560 745 575 738 598 742 570 762Z" />
        <path d="M1395 1210 1412 1240 1425 1275 1445 1280 1468 1250 1460 1305 1430 1322 1388 1318 1390 1280 1402 1270Z" />
        <path d="M945 352 958 352 956 366 945 364ZM960 1360 972 1330 978 1345 990 1345Z" />
      </g>
      <g fill="#0a9a22">
        <path d="M620 1170 640 1155 660 1156 650 1180 638 1195 622 1185ZM558 1172 572 1178 566 1188ZM650 1524 660 1524 658 1531 650 1531Z" />
        <path d="M415 206 455 205 480 218 500 236 480 228 450 216 418 214ZM455 236 480 234 495 246 470 244Z" />
      </g>
    </g>
  </svg>
);

const MapView = () => (
  <main className="flex min-w-0 flex-1 flex-col">
    <div className="flex min-h-0 flex-1 overflow-hidden border-t-[5px] border-l-4 border-[#7d7f80] bg-white pt-0.5">
      <div className="w-[685px] shrink-0" />
      <RasterMap />
    </div>
    <div className="flex h-[45px] shrink-0 items-stretch border-l-4 border-[#7d7f80] bg-[#f0f0f0] pb-0.5">
      <button type="button" aria-label="Data View" className="flex w-[42px] items-center justify-center border-b-2 border-[#3399ff] bg-[#b5d3f2]">
        <svg viewBox="0 0 16 16" className="h-[22px] w-[22px]">
          <rect x="1.4" y="1.4" width="13" height="13" fill="#b9d68a" stroke="#222" strokeWidth="2.4" />
          <path d="M3 13 9 3 13 5" stroke="#f2f6d8" strokeWidth="2" fill="none" />
        </svg>
      </button>
      <button type="button" aria-label="Layout View" className="flex w-[42px] items-center justify-center">
        <svg viewBox="0 0 16 16" className="h-[22px] w-[22px]">
          <path d="M2 1.2H10L14 5V14.8H2Z" fill="#fff" stroke="#222" strokeWidth="2" />
          <path d="M9.6 1V5.4H14" stroke="#222" strokeWidth="1.6" fill="none" />
          <path d="M5 6.4H9V9H5ZM5 11H11" stroke="#2a6db8" strokeWidth="1.6" fill="none" />
        </svg>
      </button>
      <span className="mx-1.5 w-0.5 self-center bg-[#555] py-4" />
      <button type="button" aria-label="Refresh" className="ml-1.5 flex w-[42px] items-center justify-center">
        <svg viewBox="0 0 16 16" className="h-6 w-6" fill="none" stroke="#1a5aa0" strokeWidth="2">
          <path d="M2 7C3 3 9 1 13 5M14 9C13 13 7 15 3 11" />
          <path d="M14.4 1V6H9.6ZM1.6 15V10H6.4Z" fill="#1a5aa0" stroke="none" />
        </svg>
      </button>
      <button type="button" aria-label="Pause Drawing" className="flex w-[42px] items-center justify-center">
        <svg viewBox="0 0 16 16" className="h-5 w-5"><path d="M2 1H6V15H2ZM10 1H14V15H10Z" fill="#2454b0" /></svg>
      </button>
      <ScrollArrow dir="left" className="w-[42px]" />
      <div className="my-0.5 flex-1 bg-[#cdcdcd]" />
    </div>
  </main>
);

/* ---------- ArcToolbox ---------- */

const tools = [
  ["Multidimension Tools", 1], ["Network Analyst Tools", 1], ["Parcel Fabric Tools", 1],
  ["Schematics Tools", 1], ["Server Tools", 1], ["Space Time Pattern Mining Tools", 1],
  ["Spatial Analyst Tools", 1],
  ["Conditional", 2], ["Density", 2], ["Distance", 2], ["Extraction", 2], ["Generalization", 2],
  ["Groundwater", 2], ["Hydrology", 2], ["Interpolation", 2], ["Local", 2], ["Map Algebra", 2],
  ["Math", 2], ["Multivariate", 2],
  ["Band Collection Statistics", 3], ["Class Probability", 3], ["Create Signatures", 3],
  ["Dendrogram", 3], ["Edit Signatures", 3], ["Iso Cluster", 3],
  ["Iso Cluster Unsupervised Classification", 3],
  ["Maximum Likelihood Classification", 3], ["Principal Components", 3],
  ["Neighborhood", 2],
];
const openNodes = ["Spatial Analyst Tools", "Multivariate"];
const indents = { 1: "pl-[19px]", 2: "pl-[67px]", 3: "pl-[152px]" };

const ToolRow = ({ name, level }) => {
  const script = name === "Iso Cluster Unsupervised Classification";
  return (
    <li className={`relative flex h-[45px] shrink-0 items-center gap-[15px] whitespace-nowrap ${indents[level]}`}>
      {level < 3 && <Expander open={openNodes.includes(name)} />}
      <span className="flex items-center gap-3">
        {level === 1 && (name.startsWith("Space") ? <ScriptToolbox /> : <SmallToolbox />)}
        {level === 2 && <Toolset />}
        {level === 3 && (script ? <Script /> : <Hammer />)}
        {script ? (
          <span
            role="tooltip"
            className="absolute -top-0.5 left-[189px] z-10 flex h-12 items-center border-2 border-[#767676] bg-white px-3 pr-4 text-[#606060] shadow-[8px_8px_6px_rgba(0,0,0,0.45)]"
          >
            {name}
          </span>
        ) : (
          name
        )}
      </span>
    </li>
  );
};

const ArcToolbox = () => (
  <section className="flex w-[749px] shrink-0 flex-col">
    <header className="flex h-[62px] shrink-0 items-center bg-linear-to-r from-[#9ab5d3] to-[#b9d1ec] pr-[3px] pl-2">
      <h2 className="flex-1 text-[36px] leading-none text-[#1c1c1c]">ArcToolbox</h2>
      <Pin sideways />
      <Close />
    </header>
    <div className="flex min-h-0 flex-1 flex-col border-[3px] border-[#8b8f9c] bg-white pr-1 pb-1">
      <div className="flex min-h-0 flex-1">
        <ul className="min-w-0 flex-1">
          {tools.map(([name, level]) => (
            <ToolRow key={name} name={name} level={level} />
          ))}
        </ul>
        <VScroll before={275} thumb={692} after={247} />
      </div>
      <div className="z-20 flex bg-[#f0f0f0]">
        <HScroll before={1} thumb={599} after={14} />
        <div className="w-[38px]" />
      </div>
    </div>
  </section>
);

const SideTab = ({ icon, label, className }) => (
  <button
    type="button"
    className={`flex w-[60px] flex-col items-center gap-3 rounded-l-xl border-[3px] border-[#a2a2a2] bg-[#f0f0f0] pt-2 pr-2.5 ${className}`}
  >
    {icons[icon]}
    <span className="text-[28px] leading-none text-[#707070] [writing-mode:vertical-rl]">{label}</span>
  </button>
);

/* ---------- taskbar ---------- */

const Task = ({ label, active, children }) => (
  <button
    type="button"
    aria-label={label}
    className={`flex h-[86px] w-32 shrink-0 items-center justify-center ${active ? "border-2 border-[#efe4d6] bg-[#e6bfa6]/60" : ""}`}
  >
    {children}
  </button>
);

const Taskbar = () => (
  <footer className="relative flex h-[88px] shrink-0 items-center overflow-hidden border-t-2 border-[#a39170] bg-[#5c492b] text-white">
    <svg viewBox="0 0 600 88" className="absolute top-0 left-[1050px] h-[88px] w-[600px]" aria-hidden="true">
      <defs>
        <filter id="leaf" x="0" y="0" width="100%" height="100%" colorInterpolationFilters="sRGB">
          <feTurbulence type="fractalNoise" baseFrequency="0.05" numOctaves="4" seed="4" result="n" />
          <feDisplacementMap in="SourceGraphic" in2="n" xChannelSelector="R" yChannelSelector="G" scale="10" />
        </filter>
        <filter id="leafGrain" x="0" y="0" width="100%" height="100%" colorInterpolationFilters="sRGB">
          <feTurbulence type="fractalNoise" baseFrequency="0.08 0.16" numOctaves="4" seed="9" />
          <feColorMatrix values="0 0 0 0 0.36  0 0 0 0 0.29  0 0 0 0 0.17  3 0 0 0 -1.3" />
        </filter>
      </defs>
      <g filter="url(#leaf)">
        <path d="M20 0H470L500 40 590 94H360L300 66 240 50 180 44 140 30 70 22Z" fill="#a8692c" />
        <path d="M20 0H200L160 12 80 12 50 24Z" fill="#9a8030" />
        <path d="M30 26C70 36 100 60 110 94H92C84 66 60 46 30 34ZM176 44C236 54 262 70 276 94H258C240 70 210 58 172 52Z" fill="#8a7434" />
        <path d="M176 0 300 10 330 60 250 40Z" fill="#bd6830" />
        <path d="M430 0H600V94H570L500 40 450 20Z" fill="#6e5c36" />
        <path d="M440 4 490 16 540 60 520 78 470 60 440 40ZM500 0 560 10 600 40 560 36Z" fill="#a34a2b" />
      </g>
      <rect width="600" height="88" filter="url(#leafGrain)" opacity="0.55" />
    </svg>
    <svg viewBox="0 0 600 88" className="absolute top-0 left-0 h-[88px] w-[600px]" fill="#b9683f" aria-hidden="true">
      <path d="M467 6 472 14 468 10ZM472 28 475 34 471 33ZM492 20 497 34 494 32ZM514 82 520 86 516 88Z" />
    </svg>

    <button type="button" aria-label="Start" className="relative flex w-[91px] items-center justify-center">
      <svg viewBox="0 0 52 52" className="h-[52px] w-[52px]" fill="#fff">
        <path d="M0 7 22 4V25H0ZM24 3.6 52 0V25H24ZM0 27H22V48L0 45ZM24 27H52V52L24 48.4Z" />
      </svg>
    </button>
    <nav className="relative flex flex-1 items-center" aria-label="Pinned applications">
      <Task label="Internet Explorer">
        <svg viewBox="0 0 72 72" className="h-[72px] w-[72px]" fill="none">
          <defs>
            <radialGradient id="ie"><stop offset="0" stopColor="#a5f3ff" /><stop offset="1" stopColor="#2fb2ee" /></radialGradient>
          </defs>
          <path d="M40 6C57 6 70 20 70 38V41H26C27 52 33 57 40 57 46 57 50 54 52 48H69C65 62 54 70 40 70 22 70 9 56 9 38 9 20 22 6 40 6ZM26 31H54C53 24 47 19 40 19 33 19 27 24 26 31Z" fill="url(#ie)" fillRule="evenodd" />
          <path d="M68 22C72 4 62 -2 44 8 20 20 0 48 2 64 4 74 20 70 28 62 16 66 9 66 10 56 14 40 32 22 46 12 60 4 68 6 68 22Z" fill="#f5b320" />
        </svg>
      </Task>
      <Task label="File Explorer">
        <svg viewBox="0 0 72 72" className="h-[74px] w-[74px]">
          <path d="M2 4 4 2H30L33 10H70V68H2Z" fill="#e8c969" />
          <path d="M2 12H22L26 18H42L46 22H70V70H2Z" fill="#f8e596" />
          <rect x="10" y="4" width="16" height="4" fill="#fff" /><rect x="10" y="4" width="4" height="4" fill="#4ba52f" />
          <rect x="28" y="10" width="16" height="4" fill="#fff" /><rect x="27" y="10" width="5" height="4" fill="#d4541e" />
          <rect x="44" y="16" width="18" height="4" fill="#fff" /><rect x="44" y="16" width="4" height="4" fill="#3387d1" />
          <path d="M9 72V48C9 45 11 44 14 44H58C62 44 64 45 64 48V72H48V60H25V72Z" fill="#8cc6e4" stroke="#b9e0f2" strokeWidth="1.4" />
        </svg>
      </Task>
      <Task label="App Store">
        <svg viewBox="0 0 80 80" className="h-20 w-20">
          <rect width="80" height="80" rx="12" fill="#1faef0" />
          <path d="M66 24 80 40V68C80 76 76 80 68 80H42L22 58Z" fill="#0a98e0" />
          <path d="M18 21H62L66 27H14Z" fill="#cfd2d6" />
          <path d="M13 26H67L65 60H15Z" fill="#f8f9fa" />
          <path d="M28 34C28 50 52 50 52 34" stroke="#1faef0" strokeWidth="3" fill="none" />
          <circle cx="28" cy="33" r="2.4" fill="#444" /><circle cx="52" cy="33" r="2.4" fill="#444" />
        </svg>
      </Task>
      <Task label="Adobe">
        <svg viewBox="0 0 80 80" className="h-20 w-20">
          <rect width="80" height="80" fill="#fff" />
          <path d="M12 2H33L12 51ZM48 2H69V51ZM40 20 54 51H45L41 41H31Z" fill="#e02424" />
          <text x="40" y="73" textAnchor="middle" fontFamily="Open Sans, sans-serif" fontWeight="700" fontSize="19" fill="#1c1c1c">Adobe</text>
        </svg>
      </Task>
      <Task label="Music">
        <svg viewBox="0 0 72 72" className="h-[74px] w-[74px]" fill="none">
          <path d="M9 42C4 16 18 4 36 4 54 4 68 16 63 42" stroke="#f6a61c" strokeWidth="5" />
          <path d="M11 26C14 12 24 5 36 5 48 5 58 12 61 24" stroke="#fbc527" strokeWidth="5" />
          <path d="M6 42C4 60 14 68 22 68V38C14 36 8 38 6 42ZM66 42C68 60 58 68 50 68V38C58 36 64 38 66 42Z" fill="#ee8a1c" />
          <rect x="21" y="32" width="12" height="40" rx="5" fill="#5f6063" /><rect x="39" y="32" width="12" height="40" rx="5" fill="#5f6063" />
          <path d="M25 34V70M47 34V70" stroke="#85868a" strokeWidth="3" />
        </svg>
      </Task>
      <Task label="Lenovo">
        <svg viewBox="0 0 80 80" className="h-20 w-20">
          <defs>
            <linearGradient id="lenovo" x1="0" y1="0" x2="0" y2="1"><stop offset="0" stopColor="#06a0e4" /><stop offset="0.5" stopColor="#0b77b8" /><stop offset="1" stopColor="#201a5c" /></linearGradient>
          </defs>
          <rect width="80" height="65" rx="3" fill="#fff" />
          <rect x="4" y="5" width="72" height="56" fill="url(#lenovo)" />
          <path d="M4 42C30 44 50 36 76 38V43C50 38 30 47 4 45Z" fill="#dcf0fb" />
          <text x="40" y="36" textAnchor="middle" fontFamily="Open Sans, sans-serif" fontStyle="italic" fontWeight="800" fontSize="17" fill="#fff">lenovo</text>
          <path d="M26 65H54C54 72 58 76 64 80H16C22 76 26 72 26 65Z" fill="#eceff1" />
        </svg>
      </Task>
      <Task label="Chrome">
        <svg viewBox="0 0 74 74" className="h-[74px] w-[74px]">
          <circle cx="37" cy="37" r="36.5" fill="#ffcd43" />
          <path d="M37 37 5.4 18.6A36.5 36.5 0 0 1 68.6 20H37Z" fill="#dd4b3e" />
          <path d="M5.4 18.6 22 45 37 54 52 45 35 73.4A36.5 36.5 0 0 1 5.4 18.6Z" fill="#1da261" />
          <path d="M37 20H69A36.5 36.5 0 0 1 35.6 73.4L52 45Z" fill="#ffcd43" />
          <circle cx="37" cy="37" r="16.6" fill="#f3f3f3" /><circle cx="37" cy="37" r="13.4" fill="#4a89f3" />
        </svg>
      </Task>
      <Task label="Windows Store">
        <svg viewBox="0 0 76 76" className="h-[76px] w-[76px]">
          <rect width="76" height="76" fill="#008a00" />
          <path d="M15 25 54 19 62 24V61L54 65 15 54Z" fill="#fff" />
          <path d="M24 24C24 8 40 8 46 20M30 23C30 8 46 8 48 20" stroke="#fff" strokeWidth="1.6" fill="none" />
          <path d="M22 33 31 31.6V41H22ZM33 31.2 45 29.4V41H33ZM22 43H31V51.6L22 50ZM33 43H45V54.4L33 52Z" fill="#008a00" />
        </svg>
      </Task>
      <Task label="Media application">
        <svg viewBox="0 0 80 80" className="h-20 w-20" fill="none">
          <rect x="1" y="1" width="78" height="78" fill="#d30d12" stroke="#c9a9a9" strokeWidth="2" />
          <path d="M0 1H80" stroke="#302018" strokeWidth="2" />
          <path d="M40 14 63 26V54L40 66 17 54V26Z" stroke="#fff" strokeWidth="3" />
          <path d="M23 30 40 39 57 30M40 39V58" stroke="#fff" strokeWidth="4" strokeLinecap="round" />
        </svg>
      </Task>
      <Task label="Edge">
        <svg viewBox="0 0 80 80" className="h-20 w-20">
          <path d="M1 40C1 14 20 0 42 0 64 0 80 16 80 34 80 48 70 54 60 54 50 54 46 50 47 47 50 43 50 38 50 36 48 22 36 18 24 20 12 22 4 30 1 40Z" fill="#35c3d4" />
          <path d="M66 10C75 16 80 25 80 34 80 48 70 54 60 54 50 54 46 50 47 47 50 43 50 38 50 36 58 32 64 20 66 10Z" fill="#5ee065" />
          <path d="M1 38C6 22 20 18 30 20 44 22 50 32 48 40 46 30 34 28 32 40 30 60 44 70 56 78 22 86 0 64 1 38Z" fill="#0f7fdb" />
          <path d="M32 34C18 46 20 74 44 79 58 80 70 72 74 61 72 58 66 64 56 63 38 61 32 50 32 34Z" fill="#104f96" />
        </svg>
      </Task>
      <Task label="ArcMap" active>
        <Icon className="h-[76px] w-[76px]"><GlobeLens /></Icon>
      </Task>
    </nav>

    <div className="relative flex items-center">
      <svg viewBox="0 0 58 36" className="h-9 w-[58px]" aria-label="Touch keyboard">
        <rect x="1" y="1" width="56" height="34" rx="3" fill="#fff" stroke="#33291a" strokeWidth="1.5" />
        <path d="M7 8H51M7 15H51M7 21H51" stroke="#3b3020" strokeWidth="4.5" strokeDasharray="6 2" />
        <path d="M7 28H14M18 28H40M44 28H51" stroke="#3b3020" strokeWidth="4.5" />
      </svg>
      <svg viewBox="0 0 34 50" className="ml-6 h-[50px] w-[34px]" aria-label="Plugged in">
        <path d="M8 0H12V11H22V0H26V11H33V26C33 34 28 38 19 40V50H15V40C6 38 1 34 1 26V11H8Z" fill="#fff" stroke="#3b3b3b" strokeWidth="1.2" />
        <path d="M8 24 14 31 26 16" stroke="#19b9ea" strokeWidth="4.5" fill="none" />
      </svg>
      <div className="ml-1 flex items-center">
        <div className="flex h-[50px] w-[85px] items-center justify-center border-[5px] border-white bg-linear-to-r from-[#10c860] from-23% to-[#444] to-23% text-[26px] leading-none">
          23%
        </div>
        <div className="h-6 w-2 bg-white" />
      </div>
      <svg viewBox="0 0 20 12" className="mt-[42px] ml-[62px] h-3 w-5" fill="#f2f2f2"><path d="M10 0 20 12H0Z" /></svg>
      <svg viewBox="0 0 40 40" className="ml-[70px] h-10 w-10" fill="none" stroke="#fff">
        <circle cx="20" cy="20" r="18.5" fill="#5f6062" stroke="#b8b8b8" strokeWidth="1.5" />
        <circle cx="20" cy="20" r="11" strokeWidth="3.5" />
        <path d="M20 21V31M20 21 11 15M20 21 29 15" strokeWidth="3" />
      </svg>
      <svg viewBox="0 0 40 40" className="ml-5 h-10 w-10">
        <path d="M2 0H6V38H2Z" fill="#fff" />
        <path d="M6 2C14 -1 20 4 24 6V12C30 14 34 12 38 12L34 28H24V20C16 16 12 18 6 20Z" fill="#fff" />
        <circle cx="29" cy="29" r="10" fill="#dc1417" />
        <path d="M25 25 33 33M33 25 25 33" stroke="#fff" strokeWidth="3" />
      </svg>
      <svg viewBox="0 0 40 32" className="ml-5 h-8 w-10" aria-label="Network">
        <path d="M1 24H7V30H1ZM9 18H15V30H9ZM17 13H23V30H17ZM25 7H31V30H25Z" fill="#fff" stroke="#352a19" />
        <path d="M33 1H39V30H33Z" fill="#8b8273" stroke="#352a19" />
      </svg>
      <svg viewBox="0 0 40 38" className="ml-5 h-[38px] w-10" fill="none" aria-label="Volume">
        <path d="M1 12H8L18 1V37L8 26H1Z" fill="#fff" stroke="#352a19" />
        <path d="M23 14C25 17 25 21 23 24M28 9C32 15 32 23 28 29M33 5C39 13 39 25 33 33" stroke="#cfc7b8" strokeWidth="2" />
      </svg>
      <span className="mt-1 ml-[30px]">ENG</span>
      <div className="ml-[30px] w-[160px] text-center leading-10">
        <div>21:06</div>
        <div>27/03/2021</div>
      </div>
      <div className="w-7" />
    </div>
  </footer>
);

/* ---------- page ---------- */

const menus = ["File", "Edit", "View", "Bookmarks", "Insert", "Selection", "Geoprocessing", "Customize", "Windows", "Help"];

export default function App() {
  return (
    <div className="flex h-screen flex-col overflow-hidden bg-linear-to-r from-[#f0f0f0] to-[#fcfcfc] font-['Open_Sans',sans-serif] text-[28px] leading-none text-[#111]">
      <header className="relative flex h-[58px] shrink-0 items-center justify-between border-b border-[#cf9f52] bg-[#eabc70]">
        <Icon className="ml-0.5 h-10 w-10"><GlobeLens /></Icon>
        <h1 className="absolute inset-x-0 pt-1 text-center text-[36px] text-[#222]">Untitled - ArcMap</h1>
        <div className="relative flex self-stretch pr-[3px]">
          <button type="button" aria-label="Minimize" className="flex h-[51px] w-[66px] items-center justify-center">
            <span className="mt-2.5 h-[3px] w-4 bg-[#222]" />
          </button>
          <button type="button" aria-label="Restore" className="flex h-[51px] w-[66px] items-center justify-center">
            <svg viewBox="0 0 18 16" className="h-4 w-[18px]" fill="none" stroke="#222" strokeWidth="2">
              <path d="M3 1H17V13" />
              <path d="M1 4H14V15H1Z" />
              <path d="M1 5.5H14" strokeWidth="3" />
            </svg>
          </button>
          <button type="button" aria-label="Close" className="flex h-[51px] w-[116px] items-center justify-center bg-[#c75050]">
            <svg viewBox="0 0 14 12" className="h-3 w-3.5" stroke="#fff" strokeWidth="2.4"><path d="M1 0 13 12M13 0 1 12" /></svg>
          </button>
        </div>
      </header>

      <nav className="flex h-[63px] shrink-0 items-center gap-[41px] pl-[30px]" aria-label="Menu">
        {menus.map((m) => (
          <button key={m} type="button">{m}</button>
        ))}
      </nav>

      <div className="flex shrink-0 flex-col gap-px pb-0.5">
        <Toolbar>
          <Grip />
          <ToolButton icon="new" label="New" />
          <ToolButton icon="open" label="Open" />
          <ToolButton icon="save" label="Save" />
          <ToolButton icon="print" label="Print" />
          <Sep />
          <ToolButton icon="cut" label="Cut" />
          <ToolButton icon="copy" label="Copy" />
          <ToolButton icon="paste" label="Paste" />
          <ToolButton icon="del" label="Delete" />
          <Sep />
          <ToolButton icon="undo" label="Undo" />
          <ToolButton icon="redo" label="Redo" />
          <Sep />
          <ToolButton icon="add" label="Add Data" />
          <Caret />
          <Sep />
          <div className="relative w-[369px]">
            <select aria-label="Map scale" className="h-[52px] w-full appearance-none border-2 border-[#a9adb5] bg-white pl-1.5 text-[26px]">
              <option>1:600,000</option>
            </select>
            <svg viewBox="0 0 16 16" className="pointer-events-none absolute top-3.5 right-2 h-6 w-6" fill="none">
              <path d="M3 5 8 11 13 5" stroke="#555" strokeWidth="2.8" />
            </svg>
          </div>
          <Sep />
          <ToolButton icon="edit" label="Editor Toolbar" />
          <Sep />
          <ToolButton icon="toc" label="Table Of Contents" />
          <ToolButton icon="catalog" label="Catalog" />
          <ToolButton icon="search" label="Search" />
          <ToolButton icon="toolbox" label="ArcToolbox" />
          <ToolButton icon="python" label="Python" />
          <Sep />
          <ToolButton icon="model" label="ModelBuilder" />
          <span className="w-1.5" />
          <Overflow />
        </Toolbar>
        <Toolbar>
          <Grip />
          <ToolButton icon="zoomIn" label="Zoom In" />
          <ToolButton icon="zoomOut" label="Zoom Out" />
          <ToolButton icon="pan" label="Pan" active />
          <ToolButton icon="globe" label="Full Extent" />
          <Sep />
          <ToolButton icon="fixedIn" label="Fixed Zoom In" />
          <ToolButton icon="fixedOut" label="Fixed Zoom Out" />
          <Sep />
          <ToolButton icon="back" label="Go Back" />
          <ToolButton icon="forward" label="Go Forward" />
          <Sep />
          <ToolButton icon="select" label="Select Features" />
          <Caret disabled />
          <ToolButton icon="clear" label="Clear Selection" />
          <Sep />
          <ToolButton icon="pointer" label="Select Elements" />
          <Sep />
          <ToolButton icon="info" label="Identify" />
          <ToolButton icon="bolt" label="Hyperlink" />
          <ToolButton icon="html" label="HTML Popup" />
          <Sep />
          <ToolButton icon="measure" label="Measure" />
          <Sep />
          <ToolButton icon="find" label="Find" />
          <ToolButton icon="route" label="Find Route" />
          <ToolButton icon="xy" label="Go To XY" />
          <Sep />
          <ToolButton icon="time" label="Time Slider" />
          <Sep />
          <ToolButton icon="magnifier" label="Viewer Window" />
          <span className="w-1.5" />
          <Overflow />
        </Toolbar>
      </div>

      <div className="flex min-h-0 flex-1">
        <div className="flex min-w-0 flex-1 gap-[11px]">
          <TableOfContents />
          <MapView />
          <ArcToolbox />
        </div>
        <aside className="ml-1.5 flex w-[49px] shrink-0 flex-col overflow-hidden pt-[5px]">
          <SideTab icon="results" label="Results" className="h-[172px]" />
          <SideTab icon="toolbox" label="ArcToolbox" className="h-56" />
          <SideTab icon="catalog" label="Catalog" className="mt-[34px] h-[178px]" />
          <SideTab icon="search" label="Search" className="h-[168px]" />
        </aside>
      </div>

      <div className="z-30 flex h-[50px] shrink-0 items-center bg-[#f0f0f0] pt-1 pl-2" role="status">
        <span className="flex-1">Geoprocessing tool that performs unsupervised classification on an input multiband raster.</span>
        <span className="w-[632px] text-[26px] whitespace-pre">331285.051  2109917.404 Meters</span>
      </div>
      <Taskbar />
    </div>
  );
}
